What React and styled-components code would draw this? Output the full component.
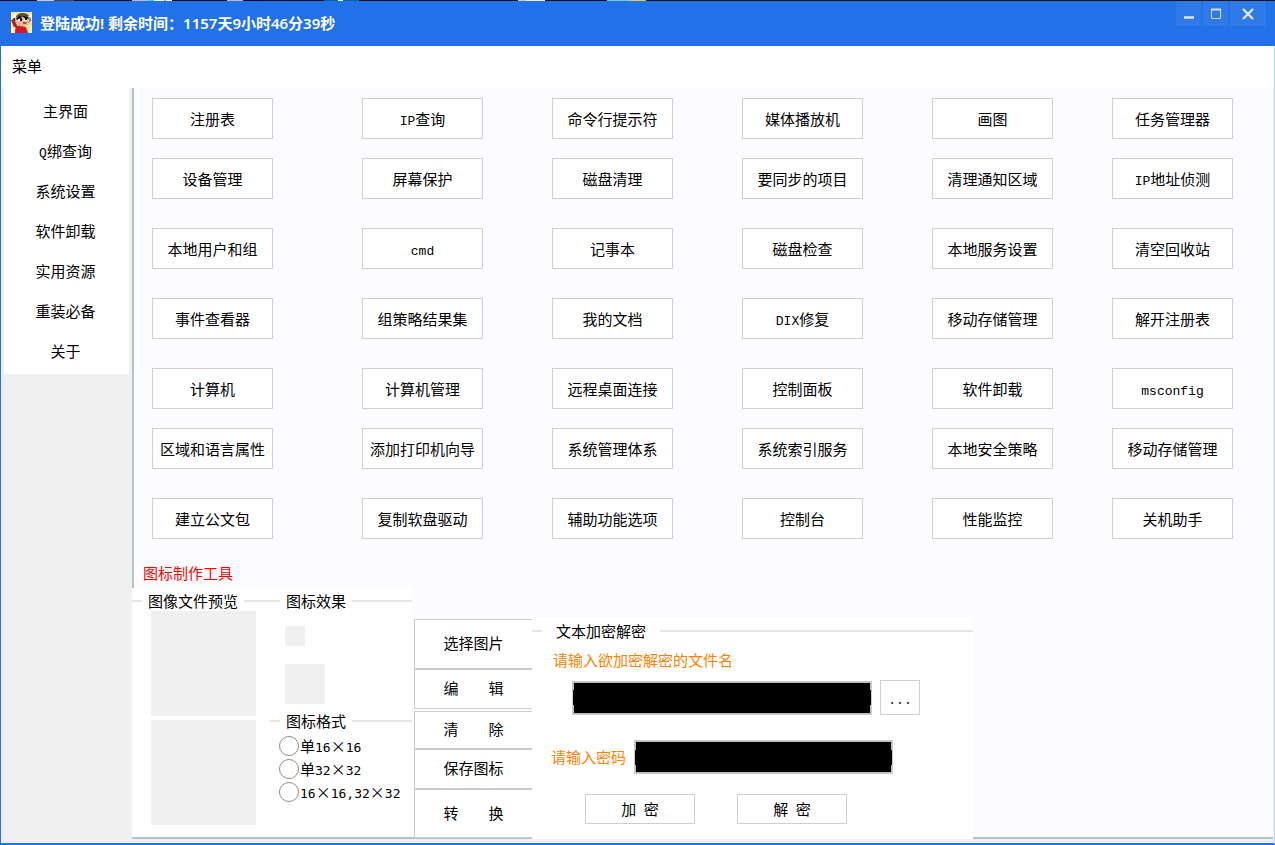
import React from 'react'
import styled, { createGlobalStyle } from 'styled-components'

const GlobalStyle = createGlobalStyle`
  * {
    box-sizing: border-box;
  }
  body {
    margin: 0;
    background: #f0f0f0;
    color: #000;
    font-family: "Noto Sans CJK SC", sans-serif;
    font-size: 15px;
    line-height: 20px;
  }
  button, input {
    font: inherit;
    color: inherit;
  }
`

const Window = styled.div`
  display: flex;
  flex-direction: column;
  min-height: 100vh;
  border: 1px solid #2271e8;
  border-right-color: #b9d4fa;
  border-bottom-width: 2px;
  border-top: none;
`

const Desktop = styled.div`
  height: 1px;
  margin: 0 -1px;
  background: linear-gradient(
    90deg,
    #111 37px, #ccc 37px 54px, #5a4030 54px 74px, #111 74px 132px,
    #bbb 132px 148px, #3cf 148px 154px, #fff 154px 164px, #3cf 164px 166px,
    #fff 166px 172px, #111 172px 227px,
    #bbb 227px 243px, #003 243px 265px, #111 265px 324px,
    #06a 324px 338px, #fff 338px 343px, #06a 343px 359px, #111 359px 518px,
    #dc9 518px 526px, #eee 526px 545px,
    #111 545px 607px, #7cc 607px 630px, #dc4 630px 646px, #1a1608 646px
  );
`

const TitleBar = styled.header`
  display: flex;
  justify-content: space-between;
  height: 45px;
  margin-right: -1px;
  background: #2271e8;
  color: #fff;
`

const Caption = styled.h1`
  display: flex;
  align-items: center;
  gap: 8px;
  margin: 0;
  padding: 0 0 2px 10px;
  font-family: "Noto Sans", "Noto Sans CJK SC", sans-serif;
  font-size: 15px;
  font-weight: 600;
`

const WindowButtons = styled.div`
  display: flex;
  gap: 2px;
  padding-right: 9px;
`

const WindowButton = styled.button`
  display: flex;
  align-items: center;
  justify-content: center;
  width: ${({ $wide }) => ($wide ? 36 : 25)}px;
  height: 25px;
  padding: 0;
  border: none;
  background: #3079e9;
`

const MenuBar = styled.div`
  display: flex;
  align-items: center;
  height: 42px;
  padding: 0 0 2px 5px;
  background: #fff;
`

const MenuButton = styled.button`
  padding: 0 6px;
  border: none;
  background: none;
`

const Body = styled.div`
  display: flex;
  flex: 1;
  padding-bottom: 4px;
  padding-left: 3px;
  padding-right: 1px;
`

const Sidebar = styled.nav`
  width: 128px;
  padding-right: 3px;
`

const NavList = styled.ul`
  margin: 0;
  padding: 3px 0;
  list-style: none;
  background: #fff;
`

const NavLink = styled.a`
  display: block;
  height: 40px;
  padding-right: 2px;
  line-height: 40px;
  text-align: center;
  color: #000;
  text-decoration: none;
`

const Main = styled.main`
  display: flex;
  flex-direction: column;
  flex: 1;
  border-left: 2px solid #b4c2cc;
  border-bottom: 2px solid #b4c2cc;
  background: #fcfcff;
`

const ToolGrid = styled.div`
  display: grid;
  grid-template-columns: 210fr 190fr 190fr 190fr 180fr 121fr;
  grid-template-rows: 60px 70px 70px 70px 60px 70px 41px;
  padding: 10px 40px 0 18px;
`

const Button = styled.button`
  width: ${({ $width }) => $width || 121}px;
  height: ${({ $height }) => $height || 41}px;
  padding: 0;
  border: 1px solid #cfcfcf;
  background: #fff;
  white-space: pre;
`

const Latin = styled.span`
  font-family: "Liberation Mono", monospace;
  font-size: 13px;
  line-height: 1;
`

const SectionTitle = styled.h2`
  margin: 24px 0 5px 9px;
  font-size: 15px;
  font-weight: 400;
  color: #f00;
`

const Panels = styled.div`
  display: flex;
  align-items: flex-end;
  flex: 1;
  margin-left: -2px;
`

const IconPanel = styled.section`
  display: flex;
  align-self: stretch;
  width: 280px;
  margin-right: 2px;
  padding-top: 3px;
  background: #fff;
`

const PreviewColumn = styled.div`
  width: 138px;
`

const OptionsColumn = styled.div`
  flex: 1;
`

const Group = styled.fieldset`
  min-width: 0;
  height: ${({ $height }) => ($height ? `${$height}px` : 'auto')};
  margin: 0;
  padding: 0;
  border: none;
`

const Legend = styled.legend`
  display: flex;
  align-items: center;
  width: 100%;
  padding: 0;
  gap: ${({ $gap }) => $gap || 6}px;

  &::before,
  &::after {
    content: '';
    width: 10px;
    height: 2px;
    background: #e6e6e6;
  }
  &::after {
    flex: 1;
  }
`

const Preview = styled.div`
  width: ${({ $size }) => $size}px;
  height: ${({ $size }) => $size}px;
  background: #f0f0f0;
`

const PreviewStack = styled.div`
  display: flex;
  flex-direction: column;
  gap: ${({ $gap }) => $gap}px;
  padding: ${({ $padding }) => $padding};
`

const RadioList = styled.div`
  display: flex;
  flex-direction: column;
  gap: 3px;
  padding: 5px 0 0 9px;
`

const RadioLabel = styled.label`
  display: flex;
  align-items: center;
  gap: 1px;
  height: 20px;
  white-space: nowrap;
`

const Radio = styled.input`
  appearance: none;
  flex: none;
  width: 20px;
  height: 20px;
  margin: 0;
  border: 1px solid #8c8c8c;
  border-radius: 50%;
  background: #fff;

  &:checked {
    background: radial-gradient(#333 4px, #fff 5px);
  }
`

const Digits = styled.span`
  font-family: "DejaVu Sans Mono", monospace;
  font-size: 13px;
  line-height: 1;
`

const ActionList = styled.div`
  display: flex;
  flex-direction: column;
  width: 118px;
  margin-bottom: -1px;
`

const ActionButton = styled.button`
  height: ${({ $height }) => $height}px;
  margin-bottom: ${({ $after }) => $after || 0}px;
  padding: 0 0 2px;
  border: 1px solid #ccc;
  border-right: none;
  background: #fff;
  white-space: pre;
`

const CryptoPanel = styled.form`
  width: 441px;
  height: 221px;
  margin-bottom: -2px;
  padding-top: 3px;
  background: #fff;
`

const Field = styled.div`
  display: flex;
  align-items: center;
  gap: 8px;
  padding: ${({ $padding }) => $padding};
`

const FieldLabel = styled.label`
  color: #ff8000;
`

const FileLabel = styled(FieldLabel)`
  display: block;
  margin: 9px 0 0 21px;
`

const MaskedInput = styled.input`
  width: ${({ $width }) => $width}px;
  height: 34px;
  padding: 1px;
  border: 1px solid #ccc;
  background:
    linear-gradient(#000, #000) center / 100% 15px no-repeat padding-box,
    linear-gradient(#000, #000) content-box,
    #bbb;
`

const ButtonRow = styled.div`
  display: flex;
  gap: 42px;
  padding: 20px 0 0 53px;
`

const navItems = ['主界面', 'Q绑查询', '系统设置', '软件卸载', '实用资源', '重装必备', '关于']

const tools = [
  '注册表', 'IP查询', '命令行提示符', '媒体播放机', '画图', '任务管理器',
  '设备管理', '屏幕保护', '磁盘清理', '要同步的项目', '清理通知区域', 'IP地址侦测',
  '本地用户和组', 'cmd', '记事本', '磁盘检查', '本地服务设置', '清空回收站',
  '事件查看器', '组策略结果集', '我的文档', 'DIX修复', '移动存储管理', '解开注册表',
  '计算机', '计算机管理', '远程桌面连接', '控制面板', '软件卸载', 'msconfig',
  '区域和语言属性', '添加打印机向导', '系统管理体系', '系统索引服务', '本地安全策略', '移动存储管理',
  '建立公文包', '复制软盘驱动', '辅助功能选项', '控制台', '性能监控', '关机助手',
]

const actions = [
  { label: '选择图片', height: 50 },
  { label: '编　　辑', height: 40, after: 2 },
  { label: '清　　除', height: 38 },
  { label: '保存图标', height: 40 },
  { label: '转　　换', height: 49 },
]

const formats = ['单16×16', '单32×32', '16×16,32×32']

// Latin letters are set in a narrower monospace than the Chinese text
const Mixed = ({ text }) => (
  <span>
    {text.split(/([A-Za-z]+)/).map((part, i) => (i % 2 ? <Latin key={i}>{part}</Latin> : part))}
  </span>
)

const FormatText = ({ text }) => (
  <span>
    {text.split(/([0-9,]+)/).map((part, i) => (i % 2 ? <Digits key={i}>{part}</Digits> : part))}
  </span>
)

const AppIcon = () => (
  <svg width="21" height="21" viewBox="0 0 21 21" aria-hidden="true">
    <rect width="21" height="21" fill="#f3e88c" />
    <path d="M0 5l4-4 3 2-4 5zM17 4l4-2v6l-3 2z" fill="#fff6c8" />
    <path d="M0 8l3-1 3 6 0 3-3-1z" fill="#a8232b" />
    <path d="M2 6l2 0 1 3-2 0zM17 6l2-1 1 3-2 3z" fill="#55342c" />
    <path d="M4 6c1-3 13-4 15 0l-1 6c-3 3-11 3-13-1z" fill="#e9b49a" />
    <path d="M5 5c1-5 11-5 13-1l-2 1-8 0z" fill="#5b4a44" />
    <path d="M5 6l4-2 2 1-5 3zM12 4l5 1 1 2-5-1z" fill="#111" />
    <path d="M7 7h4v2H7zM13 7h3v2h-3z" fill="#fff" />
    <path d="M9 6h2v3H9zM14 6h2v2h-2z" fill="#111" />
    <path d="M4 21c0-6 2-8 5-7l6 1 2 6z" fill="#d5182a" />
    <path d="M12 10l4 0-1 2-3 0z" fill="#c4453f" />
    <path d="M0 15l4 1v5H0zM17 16l4-2v7h-4z" fill="#faf0a8" />
  </svg>
)

const App = () => {
  return (
    <>
      <GlobalStyle />
      <Window>
        <Desktop />
        <TitleBar>
          <Caption>
            <AppIcon />
            登陆成功! 剩余时间：1157天9小时46分39秒
          </Caption>
          <WindowButtons>
            <WindowButton aria-label="最小化">
              <svg width="12" height="12" viewBox="0 0 12 12">
                <path d="M1 9.500h10" stroke="#dce9fc" strokeWidth="2.500" />
              </svg>
            </WindowButton>
            <WindowButton aria-label="最大化">
              <svg width="12" height="12" viewBox="0 0 12 12">
                <path d="M1.500 1.500h9v9h-9z" fill="none" stroke="#cfe0fa" />
                <path d="M1 1.500h10" stroke="#cfe0fa" strokeWidth="2" />
              </svg>
            </WindowButton>
            <WindowButton $wide aria-label="关闭">
              <svg width="12" height="12" viewBox="0 0 12 12">
                <path d="M1 1l10 10M11 1L1 11" stroke="#dce9fc" strokeWidth="2.400" />
              </svg>
            </WindowButton>
          </WindowButtons>
        </TitleBar>
        <MenuBar>
          <MenuButton>菜单</MenuButton>
        </MenuBar>
        <Body>
          <Sidebar>
            <NavList>
              {navItems.map((item) => (
                <li key={item}>
                  <NavLink href="#"><Mixed text={item} /></NavLink>
                </li>
              ))}
            </NavList>
          </Sidebar>
          <Main>
            <ToolGrid>
              {tools.map((tool, i) => (
                <Button key={i}><Mixed text={tool} /></Button>
              ))}
            </ToolGrid>
            <SectionTitle>图标制作工具</SectionTitle>
            <Panels>
              <IconPanel>
                <PreviewColumn>
                  <Group>
                    <Legend>图像文件预览</Legend>
                    <PreviewStack $gap={4} $padding="0 0 0 19px">
                      <Preview $size={105} />
                      <Preview $size={105} />
                    </PreviewStack>
                  </Group>
                </PreviewColumn>
                <OptionsColumn>
                  <Group $height={120}>
                    <Legend>图标效果</Legend>
                    <PreviewStack $gap={18} $padding="15px 0 0 15px">
                      <Preview $size={20} />
                      <Preview $size={40} />
                    </PreviewStack>
                  </Group>
                  <Group>
                    <Legend>图标格式</Legend>
                    <RadioList>
                      {formats.map((format) => (
                        <RadioLabel key={format}>
                          <Radio type="radio" name="format" />
                          <FormatText text={format} />
                        </RadioLabel>
                      ))}
                    </RadioList>
                  </Group>
                </OptionsColumn>
              </IconPanel>
              <ActionList>
                {actions.map(({ label, height, after }) => (
                  <ActionButton key={label} $height={height} $after={after}>{label}</ActionButton>
                ))}
              </ActionList>
              <CryptoPanel>
                <Group>
                  <Legend $gap={14}>文本加密解密</Legend>
                  <FileLabel htmlFor="file">请输入欲加密解密的文件名</FileLabel>
                  <Field $padding="10px 0 0 40px">
                    <MaskedInput id="file" $width={300} />
                    <Button type="button" $width={40} $height={35}><Latin>...</Latin></Button>
                  </Field>
                  <Field $padding="25px 0 0 19px">
                    <FieldLabel htmlFor="password">请输入密码</FieldLabel>
                    <MaskedInput id="password" type="password" $width={259} />
                  </Field>
                  <ButtonRow>
                    <Button type="button" $width={110} $height={30}>加{'\u2002'}密</Button>
                    <Button type="button" $width={110} $height={30}>解{'\u2002'}密</Button>
                  </ButtonRow>
                </Group>
              </CryptoPanel>
            </Panels>
          </Main>
        </Body>
      </Window>
    </>
  )
}

export default App
